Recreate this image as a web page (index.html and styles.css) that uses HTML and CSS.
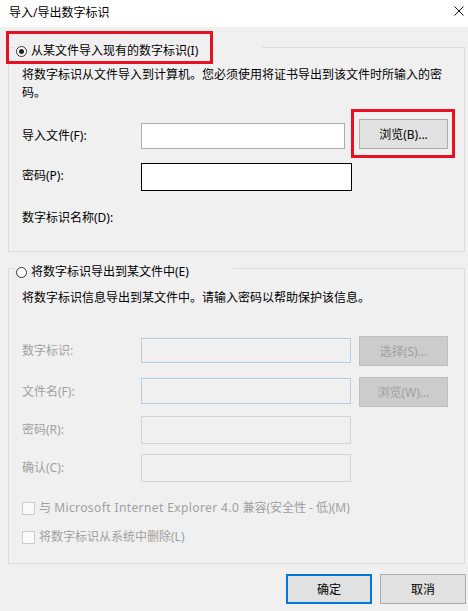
FILE: index.html
```html
<!DOCTYPE html>
<html lang="zh-CN">
<head>
<meta charset="utf-8">
<title>导入/导出数字标识</title>
<link rel="stylesheet" href="styles.css">
</head>
<body>
<div class="titlebar">
  <span class="title">导入/导出数字标识</span>
  <svg class="close" width="10" height="10" viewBox="0 0 10 10"><path d="M0.5 0.5L9.5 9.5M9.5 0.5L0.5 9.5" stroke="#111" stroke-width="1" fill="none"/></svg>
</div>
<div class="content">
  <section class="group group-import">
    <div class="group-head head-import"><span class="radio checked"></span><span>从某文件导入现有的数字标识(I)</span></div>
    <p class="desc desc-import">将数字标识从文件导入到计算机。您必须使用将证书导出到该文件时所输入的密码。</p>
    <div class="row row-file">
      <label class="field-label lbl-file">导入文件(F):</label>
      <input class="textbox tb-file" type="text">
      <button class="btn btn-browse">浏览(B)...</button>
    </div>
    <div class="row row-pass">
      <label class="field-label lbl-pass">密码(P):</label>
      <input class="textbox tb-pass" type="password">
    </div>
    <div class="row row-name">
      <span class="field-label">数字标识名称(D):</span>
    </div>
  </section>

  <section class="group group-export">
    <div class="group-head head-export"><span class="radio"></span><span>将数字标识导出到某文件中(E)</span></div>
    <p class="desc desc-export">将数字标识信息导出到某文件中。请输入密码以帮助保护该信息。</p>
    <div class="row row-id">
      <label class="field-label disabled lbl-a">数字标识:</label>
      <input class="textbox tb-blue tb-a" type="text" disabled>
      <button class="btn btn-disabled" disabled>选择(S)...</button>
    </div>
    <div class="row row-fname">
      <label class="field-label disabled lbl-b">文件名(F):</label>
      <input class="textbox tb-blue tb-b" type="text" disabled>
      <button class="btn btn-disabled" disabled>浏览(W)...</button>
    </div>
    <div class="row row-pw">
      <label class="field-label disabled lbl-c">密码(R):</label>
      <input class="textbox tb-gray" type="password" disabled>
    </div>
    <div class="row row-confirm">
      <label class="field-label disabled lbl-c">确认(C):</label>
      <input class="textbox tb-gray" type="password" disabled>
    </div>
    <div class="check check-ie"><span class="checkbox"></span><span>与 <span class="latin">Microsoft Internet Explorer 4.0</span> 兼容(安全性 - 低)(M)</span></div>
    <div class="check check-del"><span class="checkbox"></span><span>将数字标识从系统中删除(L)</span></div>
  </section>
</div>
<div class="footer">
  <button class="btn btn-ok">确定</button>
  <button class="btn btn-cancel">取消</button>
</div>

<div class="mark mark-radio"></div>
<div class="mark mark-browse"></div>
</body>
</html>
```

FILE: styles.css
```css
* { box-sizing: border-box; }

html, body {
  margin: 0;
  padding: 0;
}

body {
  position: relative;
  width: 468px;
  height: 611px;
  background: #f0f0f0;
  font-family: "Noto Sans", "Noto Sans CJK SC", sans-serif;
  font-size: 12px;
  color: #000;
  overflow: hidden;
}

.titlebar {
  height: 27px;
  background: #fff;
  display: flex;
  justify-content: space-between;
  align-items: flex-start;
  padding: 0 4px 0 9px;
}

.title {
  line-height: 25px;
}

.close {
  margin-top: 6px;
}

.content {
  padding: 0 3px 0 8px;
}

.group {
  width: 457px;
  border: 1px solid #dcdcdc;
  padding: 0 0 0 13px;
}

.group-import {
  margin-top: 20px;
  padding-bottom: 25px;
}

.group-export {
  margin-top: 16px;
  padding-bottom: 18px;
}

.group-head {
  display: flex;
  align-items: center;
  margin-top: -5px;
  margin-left: -8px;
  height: 16px;
  line-height: 16px;
  background: #f0f0f0;
  padding-left: 2px;
  gap: 4px;
}

.head-import { width: 248px; }
.head-export { width: 219px; }

.radio {
  width: 11px;
  height: 11px;
  border: 1px solid #333;
  border-radius: 50%;
  background: #fff;
  display: flex;
  align-items: center;
  justify-content: center;
  flex: none;
}

.radio.checked::after {
  content: "";
  width: 5px;
  height: 5px;
  border-radius: 50%;
  background: #222;
}

.desc {
  margin: 0;
  line-height: 18px;
  width: 426px;
}

.desc-import { margin-top: 7px; }
.desc-export { margin-top: 9px; }

.row {
  display: flex;
  align-items: flex-start;
}

.field-label {
  width: 119px;
  line-height: 16px;
  flex: none;
}

.field-label.disabled { color: #a0a0a0; }

.textbox {
  margin: 0;
  padding: 0 4px;
  font: inherit;
  background: #fff;
  border: 1px solid #adadad;
  outline: none;
  flex: none;
}

.btn {
  font: inherit;
  margin: 0;
  padding: 0;
  background: #e1e1e1;
  border: 1px solid #adadad;
  color: #000;
  flex: none;
}

/* import group */
.row-file { margin-top: 17px; }
.lbl-file { margin-top: 9px; }
.tb-file { margin-top: 4px; width: 204px; height: 26px; }
.btn-browse { margin-left: 14px; width: 89px; height: 30px; }

.row-pass { margin-top: 14px; }
.lbl-pass { margin-top: 5px; }
.tb-pass { width: 211px; height: 28px; border-color: #000; }

.row-name { margin-top: 19px; }

/* export group */
.row-id { margin-top: 29px; }
.row-fname { margin-top: 11px; }
.row-pw { margin-top: 9px; }
.row-confirm { margin-top: 10px; }

.lbl-a { margin-top: 7px; }
.lbl-b { margin-top: 7px; }
.lbl-c { margin-top: 6px; }

.tb-blue {
  width: 210px;
  background: #f0f0f0;
  border-color: #b7cbe2;
}
.tb-a { margin-top: 2px; height: 25px; }
.tb-b { margin-top: 1px; height: 26px; }

.tb-gray {
  width: 210px;
  height: 28px;
  background: #f0f0f0;
  border-color: #d4d4d4;
}

.btn-disabled {
  margin-left: 8px;
  width: 89px;
  height: 30px;
  background: #cccccc;
  border-color: #bfbfbf;
  color: #a0a0a0;
}

.check {
  display: flex;
  align-items: center;
  gap: 4px;
  line-height: 16px;
  color: #a0a0a0;
}

.latin {
  letter-spacing: 0.4px;
}

.check-ie { margin-top: 18px; }
.check-del { margin-top: 13px; }

.checkbox {
  width: 13px;
  height: 13px;
  border: 1px solid #cccccc;
  background: #fafafa;
  flex: none;
}

.footer {
  display: flex;
  justify-content: flex-end;
  gap: 8px;
  margin-top: 10px;
  padding-right: 2px;
}

.btn-ok {
  width: 86px;
  height: 30px;
  border: 2px solid #0078d7;
}

.btn-cancel {
  width: 86px;
  height: 30px;
}

/* red annotation frames drawn over the dialog */
.mark {
  position: absolute;
  border: 3px solid #e81123;
  pointer-events: none;
}

.mark-radio {
  left: 6px;
  top: 31px;
  width: 207px;
  height: 33px;
}

.mark-browse {
  left: 351px;
  top: 109px;
  width: 104px;
  height: 49px;
}
```
